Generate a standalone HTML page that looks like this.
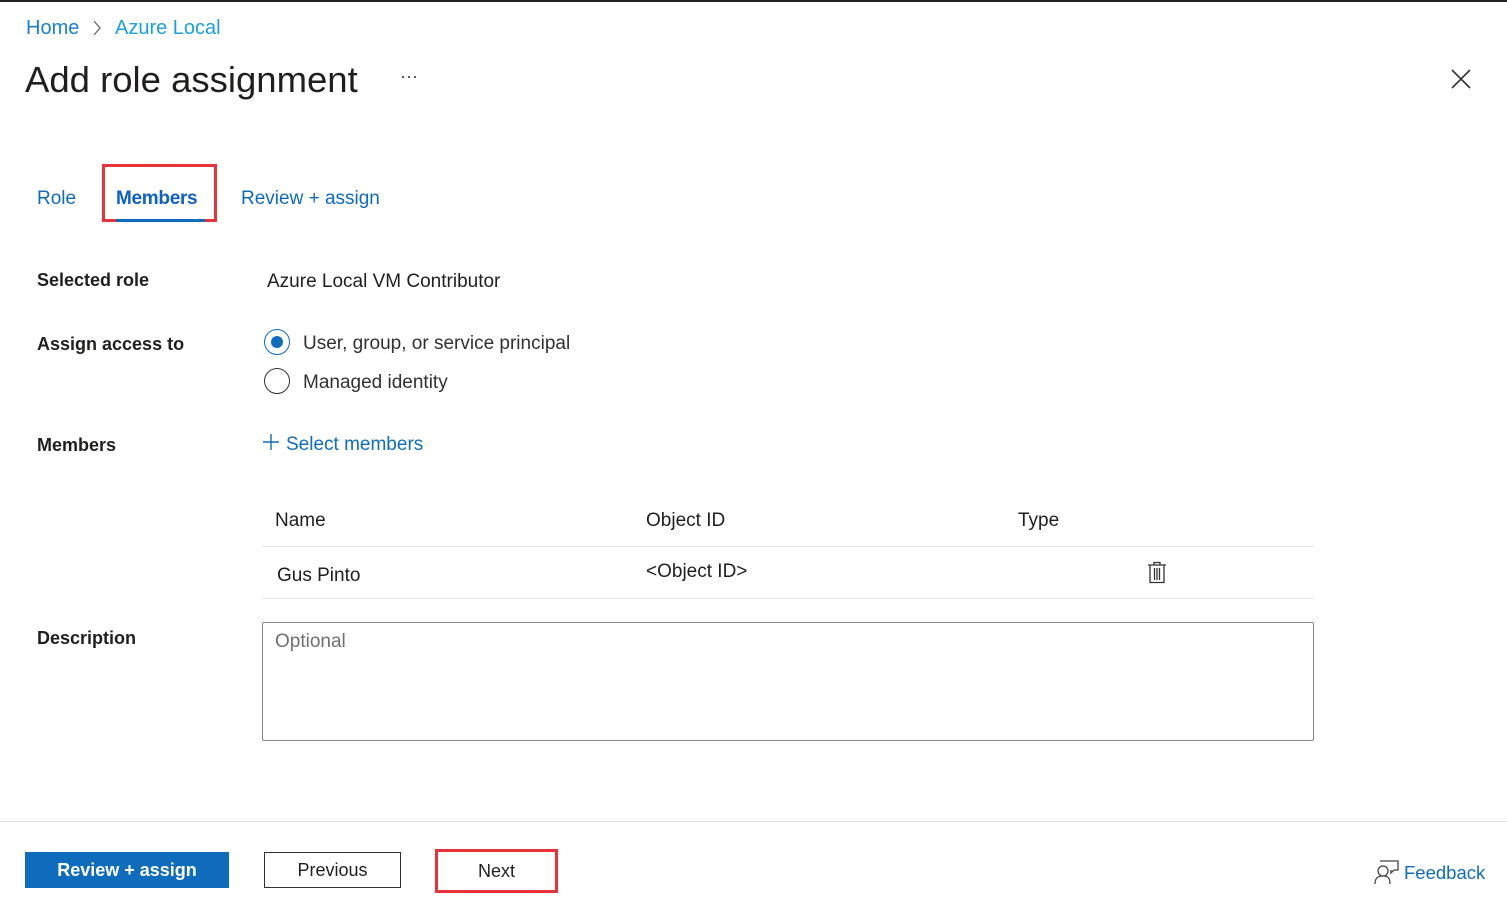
<!DOCTYPE html>
<html><head><style>
*{margin:0;padding:0;box-sizing:border-box}
body{width:1507px;height:916px;background:#fff;font-family:"Liberation Sans",sans-serif;color:#201f1e;position:relative;overflow:hidden}
.a{position:absolute;white-space:nowrap}
.blue{color:#0f6cbd}
.lbl{font-weight:bold;font-size:18px;color:#201f1e}
.t{font-size:19px}
</style></head><body>
<div class="a" style="left:0;top:0;width:1507px;height:2px;background:#222"></div>
<div class="a" style="left:26px;top:17px;font-size:20px;color:#1a7fd4">Home</div>
<svg class="a" style="left:92px;top:20px" width="10" height="16"><path d="M2 1l6 7-6 7" fill="none" stroke="#666" stroke-width="1.3"/></svg>
<div class="a" style="left:115px;top:17px;font-size:20px;color:#1aa0e0">Azure Local</div>
<div class="a" style="left:25px;top:59px;font-size:36.5px;color:#201f1e">Add role assignment</div>
<div class="a" style="left:400px;top:66px;font-size:18px;color:#444">···</div>
<svg class="a" style="left:1451px;top:69px" width="20" height="20"><path d="M1 1L19 19M19 1L1 19" stroke="#333" stroke-width="1.6"/></svg>

<div class="a blue t" style="left:37px;top:188px">Role</div>
<div class="a" style="left:116px;top:188px;color:#0f5fc9;font-size:19px;font-weight:bold;letter-spacing:-0.3px">Members</div>
<div class="a" style="left:102px;top:164px;width:115px;height:58px;border:3px solid #e8323c"></div>
<div class="a" style="left:116px;top:219px;width:89px;height:3px;background:#0f6cbd"></div>
<div class="a blue t" style="left:241px;top:188px">Review + assign</div>

<div class="a lbl" style="left:37px;top:270px">Selected role</div>
<div class="a t" style="left:267px;top:271px">Azure Local VM Contributor</div>
<div class="a lbl" style="left:37px;top:334px">Assign access to</div>
<div class="a" style="left:264px;top:329px;width:26px;height:26px;border-radius:50%;border:1.5px solid #0f6cbd"></div>
<div class="a" style="left:271px;top:336px;width:12px;height:12px;border-radius:50%;background:#0f6cbd"></div>
<div class="a t" style="left:303px;top:333px;color:#323130">User, group, or service principal</div>
<div class="a" style="left:264px;top:368px;width:26px;height:26px;border-radius:50%;border:1.5px solid #333"></div>
<div class="a t" style="left:303px;top:372px;color:#323130">Managed identity</div>

<div class="a lbl" style="left:37px;top:435px">Members</div>
<svg class="a" style="left:262px;top:433px" width="18" height="18"><path d="M9 1V17M1 9H17" stroke="#0f6cbd" stroke-width="1.4"/></svg>
<div class="a blue t" style="left:286px;top:434px">Select members</div>

<div class="a" style="left:275px;top:510px;font-size:19px">Name</div>
<div class="a" style="left:646px;top:510px;font-size:19px">Object ID</div>
<div class="a" style="left:1018px;top:510px;font-size:19px">Type</div>
<div class="a" style="left:262px;top:546px;width:1052px;height:1px;background:#e8e8e8"></div>
<div class="a t" style="left:277px;top:565px">Gus Pinto</div>
<div class="a t" style="left:646px;top:561px">&lt;Object ID&gt;</div>
<svg class="a" style="left:1147px;top:561px" width="20" height="23"><path d="M1 4H19M7 4V1.5H13V4M3 4V21.5H17V4M7.5 7V19M10 7V19M12.5 7V19" fill="none" stroke="#333" stroke-width="1.3"/></svg>
<div class="a" style="left:262px;top:598px;width:1052px;height:1px;background:#e8e8e8"></div>

<div class="a lbl" style="left:37px;top:628px">Description</div>
<div class="a" style="left:262px;top:622px;width:1052px;height:119px;border:1px solid #8a8886;border-radius:2px"></div>
<div class="a t" style="left:275px;top:631px;color:#707070">Optional</div>

<div class="a" style="left:0;top:821px;width:1507px;height:1px;background:#e1dfdd"></div>
<div class="a" style="left:25px;top:852px;width:204px;height:36px;background:#0f6cbd;color:#fff;font-weight:bold;font-size:18px;text-align:center;line-height:36px">Review + assign</div>
<div class="a" style="left:264px;top:852px;width:137px;height:36px;border:1px solid #323130;font-size:18px;text-align:center;line-height:34px">Previous</div>
<div class="a" style="left:435px;top:849px;width:123px;height:44px;border:3px solid #e8323c;font-size:18px;text-align:center;line-height:38px">Next</div>
<svg class="a" style="left:1374px;top:859px" width="26" height="26"><path d="M6 2H24V11H20L17 14V11M1 25C1 19 4 17 9 17C14 17 16 19 16 25M9 7A5 5 0 1 1 9 17A5 5 0 1 1 9 7" fill="none" stroke="#444" stroke-width="1.3"/></svg>
<div class="a blue" style="left:1404px;top:862px;font-size:18.5px">Feedback</div>
</body></html>
